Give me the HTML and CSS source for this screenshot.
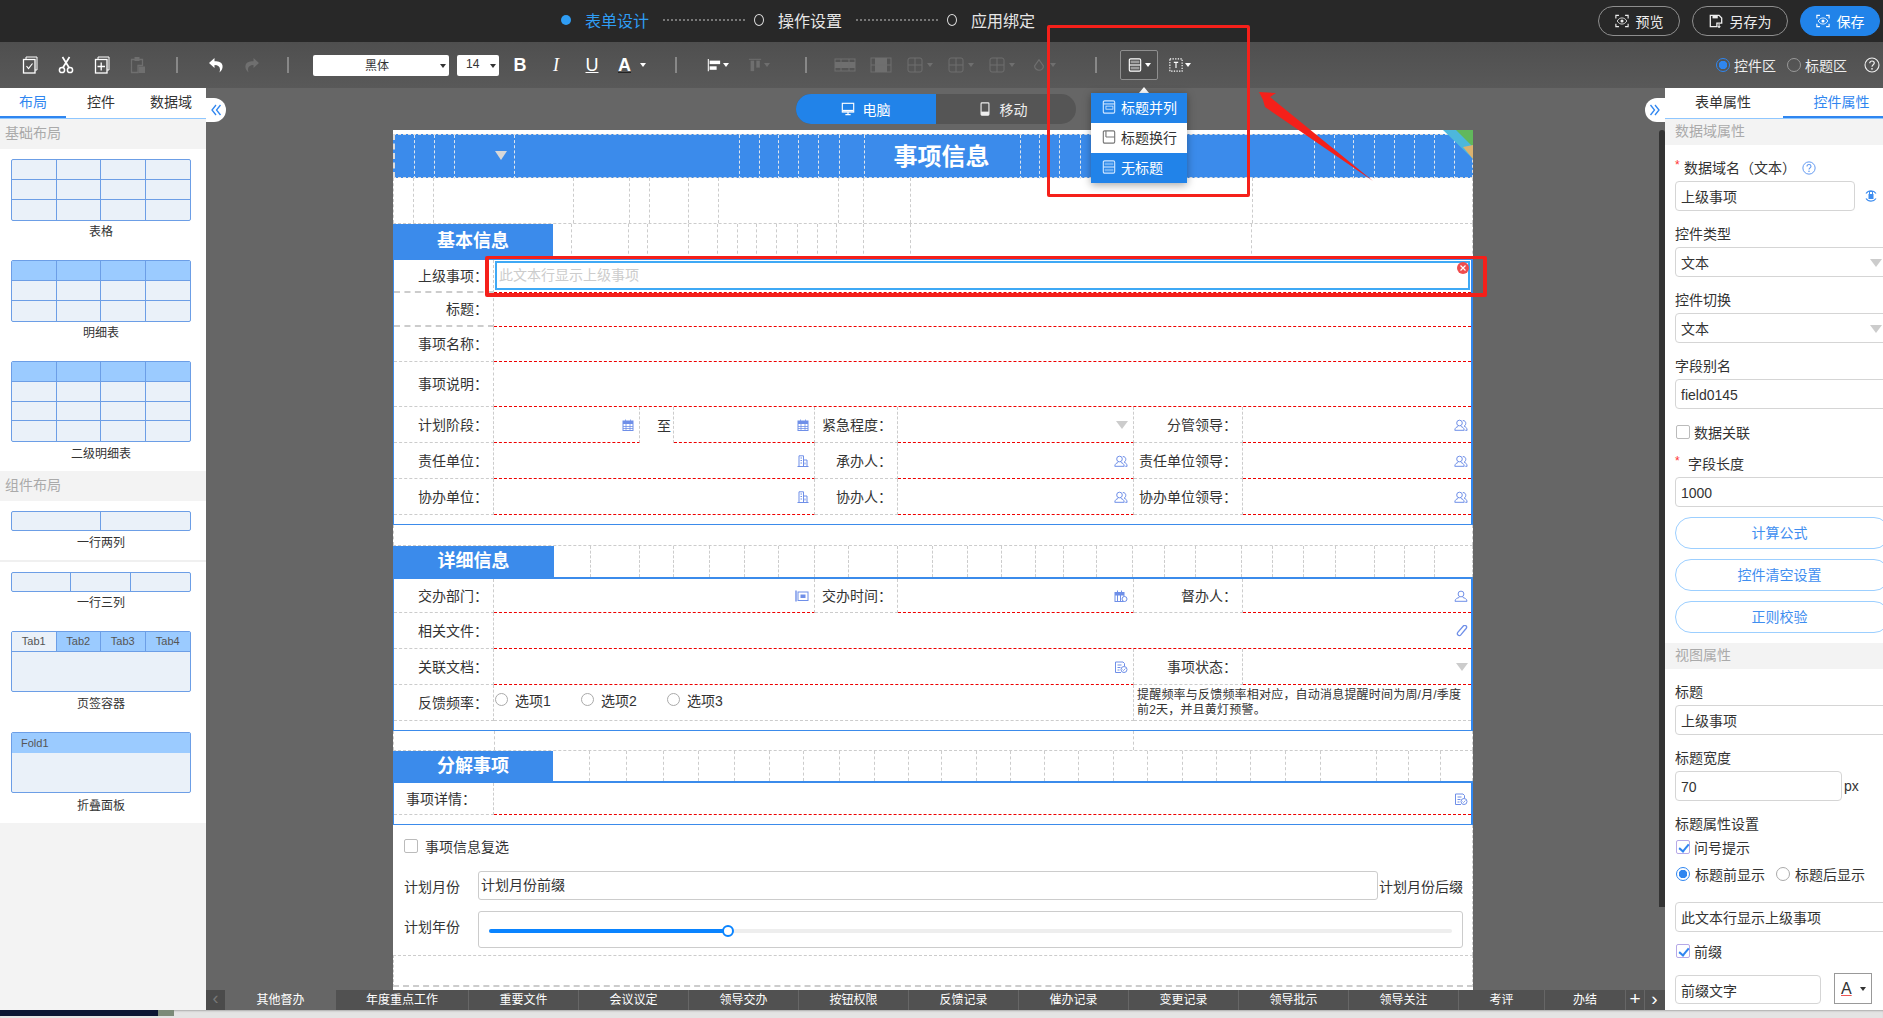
FILE: index.html
```html
<!DOCTYPE html>
<html lang="zh">
<head>
<meta charset="utf-8">
<title>表单设计</title>
<link rel="stylesheet" href="styles.css">
</head>
<body>
<svg class="defs" width="0" height="0" aria-hidden="true">
  <symbol id="form" viewBox="0 0 16 18"><path d="M4 3V1h11v13h-2" fill="none" stroke="currentColor"/><rect x="1.5" y="3.5" width="11.500" height="13.500" fill="none" stroke="currentColor" stroke-width="1.300"/><path d="M4.500 10l2 2.500 4-5" fill="none" stroke="currentColor" stroke-width="1.200"/></symbol>
  <symbol id="cut" viewBox="0 0 16 18"><circle cx="4" cy="14" r="2.600" fill="none" stroke="currentColor" stroke-width="1.500"/><circle cx="12" cy="14" r="2.600" fill="none" stroke="currentColor" stroke-width="1.500"/><path d="M5 11.500 11.500 1M11 11.500 4.500 1" stroke="currentColor" stroke-width="1.700"/></symbol>
  <symbol id="copy" viewBox="0 0 16 18"><path d="M4 3V1h11v13h-2" fill="none" stroke="currentColor"/><rect x="1.500" y="3.500" width="11.500" height="13.500" fill="none" stroke="currentColor" stroke-width="1.300"/><path d="M7.200 6.500v8M3.500 10.500h7.500" stroke="currentColor" stroke-width="1.300"/></symbol>
  <symbol id="paste" viewBox="0 0 16 18"><path d="M1.500 3.500h11v6H8v7H1.500z" fill="none" stroke="currentColor" stroke-width="1.300"/><rect x="4.500" y="1" width="5" height="4" fill="currentColor"/><rect x="8.500" y="10.500" width="6.500" height="6.500" fill="currentColor"/></symbol>
  <symbol id="undo" viewBox="0 0 16 18"><path d="M6.500 2 1 7l5.500 5V9c3.500 0 5.500 1.500 5.500 4.500 0 1-.2 2-.6 3 2.400-2 3.600-4.500 3.100-7C14 6.500 11 5.200 6.500 5.200z" fill="currentColor"/></symbol>
  <symbol id="redo" viewBox="0 0 16 18"><path d="M9.500 2 15 7l-5.500 5V9C6 9 4 10.500 4 13.500c0 1 .2 2 .6 3-2.400-2-3.600-4.500-3.100-7C2 6.500 5 5.200 9.500 5.200z" fill="currentColor"/></symbol>
  <symbol id="alignl" viewBox="0 0 16 16"><path d="M1.500 1v14" stroke="currentColor" stroke-width="1.200"/><rect x="3" y="3" width="12" height="4" fill="currentColor"/><rect x="3" y="9.500" width="8" height="4" fill="currentColor"/></symbol>
  <symbol id="alignt" viewBox="0 0 16 16"><path d="M1 1.500h14" stroke="currentColor" stroke-width="1.200"/><rect x="3" y="3" width="4" height="12" fill="currentColor"/><rect x="9.500" y="3" width="4" height="8" fill="currentColor"/></symbol>
  <symbol id="merge" viewBox="0 0 22 16"><rect x="1" y="2" width="20" height="12" fill="none" stroke="currentColor"/><rect x="1" y="5" width="20" height="6" fill="currentColor"/><path d="M7 2v12M15 2v12" stroke="currentColor"/></symbol>
  <symbol id="mergev" viewBox="0 0 22 16"><rect x="1" y="1" width="20" height="14" fill="none" stroke="currentColor"/><rect x="5" y="1" width="12" height="14" fill="currentColor"/><path d="M1 8h20" stroke="currentColor"/></symbol>
  <symbol id="cross" viewBox="0 0 16 16"><rect x="1" y="1" width="14" height="14" rx="2" fill="none" stroke="currentColor"/><path d="M8 1v14M1 8h14" stroke="currentColor"/></symbol>
  <symbol id="drop" viewBox="0 0 16 16"><path d="M8 2 13 9a5 5 0 1 1-10 0z" fill="none" stroke="currentColor" stroke-width="1.400"/></symbol>
  <symbol id="rows" viewBox="0 0 16 16"><rect x="1.500" y="1" width="13" height="14" rx="1.500" fill="none" stroke="currentColor" stroke-width="1.300"/><rect x="3" y="3" width="10" height="3" fill="currentColor" opacity=".45"/><path d="M1.500 8h13" stroke="currentColor" stroke-width="1.300"/><rect x="3" y="10" width="10" height="3" fill="currentColor" opacity=".45"/></symbol>
  <symbol id="rows2" viewBox="0 0 16 16"><rect x="1.500" y="1" width="13" height="14" rx="1.500" fill="none" stroke="currentColor" stroke-width="1.300"/><path d="M1.500 4.500h13" stroke="currentColor" stroke-width="1.300"/><rect x="4.500" y="7" width="8" height="3.500" fill="none" stroke="currentColor"/></symbol>
  <symbol id="rows3" viewBox="0 0 16 16"><rect x="1.500" y="1" width="13" height="14" rx="1.500" fill="none" stroke="currentColor" stroke-width="1.300"/><path d="M4.500 1v7M4.500 8h10" stroke="currentColor" stroke-width="1.300"/></symbol>
  <symbol id="tbox" viewBox="0 0 16 16"><rect x="1" y="1" width="14" height="14" fill="none" stroke="currentColor" stroke-dasharray="1.500 1.500" stroke-width="1.300"/><path d="M5.500 5h5M8 5v6.500" stroke="currentColor" stroke-width="1.300"/></symbol>
  <symbol id="eye" viewBox="0 0 16 16"><path d="M1 5V1.500h3.500M11.500 1.500H15V5M15 11v3.500h-3.500M4.500 14.500H1V11" fill="none" stroke="currentColor" stroke-width="1.300"/><path d="M2.500 8C4 5.500 6 4.500 8 4.500s4 1 5.500 3.500C12 10.500 10 11.500 8 11.500S4 10.500 2.500 8z" fill="none" stroke="currentColor"/><circle cx="8" cy="8" r="1.800" fill="currentColor"/></symbol>
  <symbol id="save" viewBox="0 0 16 16"><path d="M1.500 1.500h10l3 3v6H9v4H1.500z" fill="none" stroke="currentColor" stroke-width="1.500"/><rect x="4" y="1.500" width="6" height="3.500" fill="currentColor"/><path d="M11.500 11.500v4M10 14l1.500 1.500L13 14" fill="none" stroke="currentColor" stroke-width="1.200"/></symbol>
  <symbol id="pc" viewBox="0 0 16 16"><rect x="1.500" y="1.500" width="13" height="10" fill="none" stroke="currentColor" stroke-width="1.300"/><rect x="2" y="9" width="12" height="2" fill="currentColor"/><path d="M8 11.500v3M5 14.500h6" stroke="currentColor" stroke-width="1.400"/></symbol>
  <symbol id="mobile" viewBox="0 0 16 16"><rect x="3.500" y="1" width="9" height="14" rx="1" fill="none" stroke="currentColor" stroke-width="1.300"/><rect x="3.500" y="11" width="9" height="4" fill="currentColor"/></symbol>
  <symbol id="help" viewBox="0 0 16 16"><circle cx="8" cy="8" r="7" fill="none" stroke="currentColor" stroke-width="1.100"/><path d="M5.700 6.200C5.700 4.800 6.800 4 8 4s2.300.8 2.300 2.100C10.300 7.800 8 7.900 8 9.800" fill="none" stroke="currentColor" stroke-width="1.200"/><circle cx="8" cy="11.800" r=".9" fill="currentColor"/></symbol>
  <symbol id="cal" viewBox="0 0 12 12"><rect x="1" y="2" width="10" height="9.500" fill="none" stroke="currentColor"/><rect x="1" y="2" width="10" height="3" fill="currentColor"/><path d="M3.500 .5v2M8.500 .5v2M1 7.500h10M1 9.500h10M4 5v6M8 5v6" stroke="currentColor" stroke-width=".8"/></symbol>
  <symbol id="org" viewBox="0 0 12 12"><path d="M2 11.500V.8h4.500v10.700M6.500 5H10v6.500M.5 11.500h11" fill="none" stroke="currentColor"/><path d="M3.500 3h1.500M3.500 5.500h1.500M3.500 8h1.500M8 7.500v2" stroke="currentColor"/></symbol>
  <symbol id="users" viewBox="0 0 14 12"><circle cx="5.500" cy="4" r="2.800" fill="none" stroke="currentColor"/><path d="M.8 11.300c0-2.500 2-3.500 3.400-3.800M6.800 7.500c1.500.3 3.400 1.300 3.400 3.800H.8" fill="none" stroke="currentColor"/><path d="M8.800 1.500c2 0 3 1.300 3 2.800 0 1.200-.7 2.300-1.700 2.900 1.500.5 3 1.600 3 4.100h-1.800" fill="none" stroke="currentColor"/></symbol>
  <symbol id="user" viewBox="0 0 14 12"><circle cx="7" cy="4" r="2.900" fill="none" stroke="currentColor"/><path d="M1 11.300c0-2.500 2.600-3.500 4.300-3.800M8.700 7.500c1.700.3 4.300 1.300 4.300 3.800H1" fill="none" stroke="currentColor"/></symbol>
  <symbol id="calc" viewBox="0 0 14 12"><rect x="1" y="2.500" width="9" height="9" fill="none" stroke="currentColor"/><rect x="1" y="2.500" width="9" height="3" fill="currentColor"/><path d="M3.500 .5v2M7.500 .5v2M3.500 5v6M6.500 5v6" stroke="currentColor"/><circle cx="10.500" cy="9" r="2.500" fill="#fff" stroke="currentColor"/></symbol>
  <symbol id="dept" viewBox="0 0 14 12"><path d="M1 .5v11" stroke="currentColor" stroke-width="1.400"/><rect x="3" y="2" width="10" height="8.500" fill="none" stroke="currentColor"/><rect x="5.500" y="4.500" width="5" height="3.500" fill="currentColor"/></symbol>
  <symbol id="clip" viewBox="0 0 12 12"><path d="M10.500 3 4.800 9.800c-.8 1-2 1-2.800.3s-.8-1.900 0-2.900L7.300 1C8.100.2 9.200.1 10 .8s.8 1.800.1 2.700L5 9.600" fill="none" stroke="currentColor" stroke-width="1.300"/></symbol>
  <symbol id="doc" viewBox="0 0 14 12"><path d="M9 1H1.500v10.500H7M9 1l1.500 1.500V5" fill="none" stroke="currentColor"/><path d="M3.500 4h4M3.500 6.500h3M3.500 9h2" stroke="currentColor"/><circle cx="10" cy="8.500" r="3" fill="none" stroke="currentColor"/><path d="M8.500 8.500l1 1 2-2" fill="none" stroke="currentColor" stroke-width=".8"/></symbol>
  <symbol id="clr" viewBox="0 0 12 12"><circle cx="6" cy="6" r="6" fill="#f04d4f"/><path d="M3.500 3.500l5 5M8.500 3.500l-5 5" stroke="#fff" stroke-width="1.200"/></symbol>
  <symbol id="bind" viewBox="0 0 14 14"><path d="M2 4.500A6 6 0 0 1 12 4.500M12 9.500A6 6 0 0 1 2 9.500" fill="none" stroke="currentColor" stroke-width="1.200"/><rect x="4.500" y="5" width="5" height="5" fill="currentColor"/><rect x="5.500" y="2.500" width="3" height="3" fill="none" stroke="currentColor"/></symbol>
  <symbol id="chevl" viewBox="0 0 12 12"><path d="M6 1 2 6l4 5M10.500 1l-4 5 4 5" fill="none" stroke="currentColor" stroke-width="1.300"/></symbol>
  <symbol id="chevr" viewBox="0 0 12 12"><path d="M6 1l4 5-4 5M1.500 1l4 5-4 5" fill="none" stroke="currentColor" stroke-width="1.300"/></symbol>
</svg>

<div class="app">
  <header class="hd">
    <div class="steps">
      <i class="st-dot"></i><span class="st-on">表单设计</span><i class="st-line"></i>
      <i class="st-ring"></i><span>操作设置</span><i class="st-line"></i>
      <i class="st-ring"></i><span>应用绑定</span>
    </div>
    <div class="hd-btns">
      <button class="hb hb-1"><svg class="ic14"><use href="#eye"/></svg>预览</button>
      <button class="hb hb-2"><svg class="ic14"><use href="#save"/></svg>另存为</button>
      <button class="hb hb-3"><svg class="ic14"><use href="#eye"/></svg>保存</button>
    </div>
  </header>

  <div class="tb">
    <span class="tool"><svg class="ic16"><use href="#form"/></svg></span>
    <span class="tool"><svg class="ic16"><use href="#cut"/></svg></span>
    <span class="tool"><svg class="ic16"><use href="#copy"/></svg></span>
    <span class="tool dim"><svg class="ic16"><use href="#paste"/></svg></span>
    <i class="sep sep-a"></i>
    <span class="tool tool-u"><svg class="ic16"><use href="#undo"/></svg></span>
    <span class="tool dim"><svg class="ic16"><use href="#redo"/></svg></span>
    <i class="sep sep-b"></i>
    <span class="sel sel-font">黑体<i class="car car-dk"></i></span>
    <span class="sel sel-size">14<i class="car car-dk"></i></span>
    <span class="tool tool-b fmt fmt-b">B</span>
    <span class="tool fmt fmt-i">I</span>
    <span class="tool fmt fmt-u">U</span>
    <span class="tool tool-a fmt fmt-a">A<i class="car"></i></span>
    <i class="sep sep-c"></i>
    <span class="tool tool-al"><svg class="ic14"><use href="#alignl"/></svg><i class="car"></i></span>
    <span class="tool tool-at dim"><svg class="ic14"><use href="#alignt"/></svg><i class="car"></i></span>
    <i class="sep sep-d"></i>
    <span class="tool tool-m1 dim"><svg class="ic22"><use href="#merge"/></svg></span>
    <span class="tool dim"><svg class="ic22"><use href="#mergev"/></svg></span>
    <span class="tool tool-w dim"><svg class="ic16"><use href="#cross"/></svg><i class="car"></i></span>
    <span class="tool tool-w dim"><svg class="ic16"><use href="#cross"/></svg><i class="car"></i></span>
    <span class="tool tool-w dim"><svg class="ic16"><use href="#cross"/></svg><i class="car"></i></span>
    <span class="tool tool-w tool-dr dim"><svg class="ic14"><use href="#drop"/></svg><i class="car"></i></span>
    <i class="sep sep-e"></i>
    <span class="tool-active"><svg class="ic14"><use href="#rows"/></svg><i class="car"></i></span>
    <span class="tool tool-t"><svg class="ic14"><use href="#tbox"/></svg><i class="car"></i></span>
    <div class="zone">
      <label class="zn"><i class="radio radio-on radio-dk"></i>控件区</label>
      <label class="zn"><i class="radio radio-dk"></i>标题区</label>
      <svg class="ic16 zone-help"><use href="#help"/></svg>
    </div>
  </div>

  <main class="main">
    <aside class="lp">
      <nav class="tabs tabs-l"><span class="tab on">布局</span><span class="tab">控件</span><span class="tab">数据域</span></nav>
      <h4 class="grp">基础布局</h4>
      <div class="lib">
        <div class="tpl t-4x3"><i></i><i></i><i></i><i></i><i></i><i></i><i></i><i></i><i></i><i></i><i></i><i></i></div>
        <p class="cap cap-1">表格</p>
        <div class="tpl t-4x3 t-head"><i></i><i></i><i></i><i></i><i></i><i></i><i></i><i></i><i></i><i></i><i></i><i></i></div>
        <p class="cap cap-1">明细表</p>
        <div class="tpl t-4x4 t-head"><i></i><i></i><i></i><i></i><i></i><i></i><i></i><i></i><i></i><i></i><i></i><i></i><i></i><i></i><i></i><i></i></div>
        <p class="cap cap-3">二级明细表</p>
      </div>
      <h4 class="grp">组件布局</h4>
      <div class="lib lib-b">
        <div class="tpl t-2"><i></i><i></i></div>
        <p class="cap cap-4">一行两列</p>
        <hr class="lib-hr">
        <div class="tpl t-3"><i></i><i></i><i></i></div>
        <p class="cap cap-5">一行三列</p>
        <div class="tpl t-tabs">
          <div class="tabrow"><i class="cur">Tab1</i><i>Tab2</i><i>Tab3</i><i>Tab4</i></div>
        </div>
        <p class="cap cap-6">页签容器</p>
        <div class="tpl t-fold"><div class="foldhd">Fold1</div></div>
        <p class="cap cap-7">折叠面板</p>
      </div>
    </aside>

    <section class="canvas">
      <div class="switch-wrap">
        <div class="switch">
          <span class="sw sw-on"><svg class="ic14"><use href="#pc"/></svg>电脑</span>
          <span class="sw"><svg class="ic14"><use href="#mobile"/></svg>移动</span>
        </div>
      </div>

      <div class="paper">
        <div class="band">
          <div class="gd gd-title"><i></i><i></i><i></i><i></i><i></i><i></i><i></i><i></i><i></i><i></i><i></i><i></i><i></i><i></i><i></i><i></i><i></i><i></i><i></i><i></i><i></i><i></i><i></i><i></i><i></i></div>
          <h1 class="band-title">事项信息</h1>
          <i class="band-tri"></i>
        </div>
        <div class="gd gd-blank"><i></i><i></i><i></i><i></i><i></i><i></i><i></i><i></i><i></i><i></i><i></i><i></i></div>

        <div class="sec-head sh-1"><h2 class="sec-label">基本信息</h2><i></i><i></i><i></i><i></i><i></i><i></i><i></i><i></i><i></i><i></i><i></i><i></i><i></i><i></i><i></i></div>
        <div class="tbl tbl-1">
          <div class="lab thick">上级事项：</div>
          <div class="val c-end val-sel"><div class="selected">此文本行显示上级事项<svg class="sel-x"><use href="#clr"/></svg></div></div>
          <div class="lab thick">标题：</div><div class="val c-end"></div>
          <div class="lab">事项名称：</div><div class="val c-end"></div>
          <div class="lab">事项说明：</div><div class="val c-end"></div>
          <div class="lab">计划阶段：</div>
          <div class="val"><svg class="fi fi-12"><use href="#cal"/></svg></div>
          <div class="mid">至</div>
          <div class="val"><svg class="fi fi-12"><use href="#cal"/></svg></div>
          <div class="lab">紧急程度：</div>
          <div class="val"><i class="tri"></i></div>
          <div class="lab">分管领导：</div>
          <div class="val v-last"><svg class="fi"><use href="#users"/></svg></div>
          <div class="lab">责任单位：</div>
          <div class="val c-3"><svg class="fi fi-12"><use href="#org"/></svg></div>
          <div class="lab">承办人：</div>
          <div class="val"><svg class="fi"><use href="#users"/></svg></div>
          <div class="lab">责任单位领导：</div>
          <div class="val v-last"><svg class="fi"><use href="#users"/></svg></div>
          <div class="lab">协办单位：</div>
          <div class="val c-3"><svg class="fi fi-12"><use href="#org"/></svg></div>
          <div class="lab">协办人：</div>
          <div class="val"><svg class="fi"><use href="#users"/></svg></div>
          <div class="lab">协办单位领导：</div>
          <div class="val v-last"><svg class="fi"><use href="#users"/></svg></div>
        </div>
        <div class="gap gap-1"></div>

        <div class="sec-head sh-2"><h2 class="sec-label">详细信息</h2><i></i><i></i><i></i><i></i><i></i><i></i><i></i><i></i><i></i><i></i><i></i><i></i><i></i><i></i><i></i><i></i><i></i><i></i><i></i><i></i><i></i><i></i><i></i><i></i><i></i><i></i></div>
        <div class="tbl tbl-2">
          <div class="lab">交办部门：</div>
          <div class="val c-3"><svg class="fi"><use href="#dept"/></svg></div>
          <div class="lab">交办时间：</div>
          <div class="val"><svg class="fi"><use href="#calc"/></svg></div>
          <div class="lab">督办人：</div>
          <div class="val v-last"><svg class="fi"><use href="#user"/></svg></div>
          <div class="lab">相关文件：</div>
          <div class="val c-end v-last"><svg class="fi fi-12"><use href="#clip"/></svg></div>
          <div class="lab">关联文档：</div>
          <div class="val c-lead"><svg class="fi"><use href="#doc"/></svg></div>
          <div class="lab">事项状态：</div>
          <div class="val v-last"><i class="tri"></i></div>
          <div class="lab">反馈频率：</div>
          <div class="val c-lead v-opts">
            <label class="opt"><i class="radio"></i>选项1</label>
            <label class="opt"><i class="radio"></i>选项2</label>
            <label class="opt"><i class="radio"></i>选项3</label>
          </div>
          <div class="note c-note">提醒频率与反馈频率相对应，自动消息提醒时间为周/月/季度<br>前2天，并且黄灯预警。</div>
        </div>
        <div class="gap gap-2"><i></i><i></i></div>

        <div class="sec-head sh-3"><h2 class="sec-label">分解事项</h2><i></i><i></i><i></i><i></i><i></i><i></i><i></i><i></i><i></i><i></i><i></i><i></i><i></i><i></i><i></i><i></i><i></i><i></i><i></i><i></i><i></i><i></i><i></i><i></i><i></i><i></i></div>
        <div class="tbl tbl-3">
          <div class="lab lab-in">事项详情：</div>
          <div class="val c-end v-last"><svg class="fi"><use href="#doc"/></svg></div>
        </div>

        <div class="extra">
          <label class="chk-row"><i class="chk"></i>事项信息复选</label>
          <div class="ex-row">
            <span class="ex-lab">计划月份</span>
            <div class="ex-input">计划月份前缀</div>
            <span class="ex-suffix">计划月份后缀</span>
          </div>
          <div class="ex-row ex-row-s">
            <span class="ex-lab ex-lab-s">计划年份</span>
            <div class="ex-slider"><div class="track"><div class="fill"><i class="thumb"></i></div></div></div>
          </div>
        </div>
        <div class="foot-dash"></div>
      </div>

      <nav class="sheet">
        <span class="sh-arrow">‹</span>
        <span class="sh-tab sh-cur">其他督办</span>
        <span class="sh-tab sh-w1">年度重点工作</span>
        <span class="sh-tab">重要文件</span>
        <span class="sh-tab">会议议定</span>
        <span class="sh-tab">领导交办</span>
        <span class="sh-tab">按钮权限</span>
        <span class="sh-tab">反馈记录</span>
        <span class="sh-tab">催办记录</span>
        <span class="sh-tab">变更记录</span>
        <span class="sh-tab">领导批示</span>
        <span class="sh-tab">领导关注</span>
        <span class="sh-tab sh-w2">考评</span>
        <span class="sh-tab sh-w3">办结</span>
        <span class="sh-ctl sh-plus">+</span>
        <span class="sh-ctl">›</span>
      </nav>

      <button class="fold fold-l"><svg class="ic12"><use href="#chevl"/></svg></button>
      <button class="fold fold-r"><svg class="ic12"><use href="#chevr"/></svg></button>
      <i class="scrollbar"></i>
    </section>

    <aside class="rp">
      <nav class="tabs tabs-r"><span class="tab">表单属性</span><span class="tab on">控件属性</span></nav>
      <h4 class="grp grp-r">数据域属性</h4>
      <div class="field f-first">
        <div class="f-lab"><em class="req">*</em>数据域名（文本）<svg class="q"><use href="#help"/></svg></div>
        <div class="f-line"><div class="inp inp-180">上级事项</div><svg class="bind"><use href="#bind"/></svg></div>
      </div>
      <div class="field"><div class="f-lab">控件类型</div><div class="inp">文本<i class="tri tri-r"></i></div></div>
      <div class="field"><div class="f-lab">控件切换</div><div class="inp">文本<i class="tri tri-r"></i></div></div>
      <div class="field"><div class="f-lab">字段别名</div><div class="inp">field0145</div></div>
      <label class="chk-r chk-r-a"><i class="chk"></i>数据关联</label>
      <div class="field f-len"><div class="f-lab"><em class="req req-w">*</em>字段长度</div><div class="inp">1000</div></div>
      <button class="pill pill-1">计算公式</button>
      <button class="pill">控件清空设置</button>
      <button class="pill">正则校验</button>
      <h4 class="grp grp-r grp-v">视图属性</h4>
      <div class="field"><div class="f-lab">标题</div><div class="inp">上级事项</div></div>
      <div class="field"><div class="f-lab">标题宽度</div><div class="f-line"><div class="inp inp-167">70</div><span class="px">px</span></div></div>
      <div class="field f-attr"><div class="f-lab">标题属性设置</div></div>
      <label class="chk-r chk-r-b"><i class="chk chk-on"></i>问号提示</label>
      <div class="rad-row">
        <label class="rad"><i class="radio radio-on"></i>标题前显示</label>
        <label class="rad"><i class="radio"></i>标题后显示</label>
      </div>
      <div class="inp inp-ph">此文本行显示上级事项</div>
      <label class="chk-r chk-r-c"><i class="chk chk-on"></i>前缀</label>
      <div class="f-line f-pre"><div class="inp inp-146">前缀文字</div><div class="colorbox"><span class="cb-a">A</span><i class="car car-dk"></i></div></div>
    </aside>
  </main>

  <footer class="strip"><i class="s-navy"></i><i class="s-green"></i></footer>

  <div class="menu-tip"></div>
  <ul class="menu">
    <li class="mi mi-on"><svg class="ic14"><use href="#rows2"/></svg>标题并列</li>
    <li class="mi mi-w"><svg class="ic14"><use href="#rows3"/></svg>标题换行</li>
    <li class="mi mi-on"><svg class="ic14"><use href="#rows"/></svg>无标题</li>
  </ul>
  <i class="mark mark-menu"></i>
  <i class="mark mark-field"></i>
  <svg class="mark-arrow" viewBox="0 0 130 100"><polygon points="1,1 18,2 12,6 115,90 7,16 5,9" fill="#f5201a"/></svg>
  <svg class="ribbon" viewBox="0 0 30 30"><polygon points="0,0 30,0 30,29" fill="#4db7dc"/><polygon points="13,0 30,0 30,17 22,9" fill="#61b85c"/><polygon points="20,17 30,15 30,29" fill="#dcb26e"/></svg>
</div>
</body>
</html>
```

FILE: styles.css
```css
* { box-sizing: border-box; }
html, body { margin: 0; padding: 0; }
body {
  width: 1883px; height: 1018px; overflow: hidden;
  font-family: "Liberation Sans", "Noto Sans CJK SC", sans-serif;
  font-size: 14px; color: #333; background: #e4e4e4;
}
i, em { font-style: normal; }
h1, h2, h4, p, ul { margin: 0; padding: 0; font-weight: normal; }
button { font: inherit; background: none; border: 0; padding: 0; }
.defs { position: absolute; }
svg { display: block; flex: none; }
.ic12 { width: 12px; height: 12px; }
.ic14 { width: 14px; height: 14px; }
.ic16 { width: 16px; height: 18px; }
.ic22 { width: 22px; height: 16px; }

.app { position: relative; width: 1883px; height: 1018px; display: flex; flex-direction: column; }

/* header */
.hd { height: 42px; background: #282828; color: #e6e6e6; display: flex; align-items: center; font-size: 16px; flex: none; }
.steps { margin-left: 561px; margin-top: -3px; display: flex; align-items: center; gap: 14px; }
.st-dot { width: 10px; height: 10px; border-radius: 50%; background: #2f9df4; }
.st-on { color: #2f9df4; }
.st-line { width: 82px; border-top: 2px dotted #777; margin-right: -5px; }
.st-ring { width: 10px; height: 12px; border: 1.500px solid #ddd; border-radius: 50%; }
.hd-btns { margin-left: auto; margin-right: 3px; display: flex; gap: 12px; }
.hb { height: 30px; border: 1px solid #8e8e8e; border-radius: 15px; color: #eee; font-size: 14px; display: flex; align-items: center; justify-content: center; gap: 7px; padding-bottom: 1px; }
.hb-1 { width: 82px; }
.hb-2 { width: 96px; }
.hb-3 { width: 80px; background: #2183e9; border-color: #2183e9; color: #fff; }

/* toolbar */
.tb { height: 46px; flex: none; padding-left: 12px; display: flex; align-items: center; color: #fff; background: linear-gradient(#4f4f4f, #595959); }
.tool { width: 36px; height: 24px; display: flex; align-items: center; justify-content: center; gap: 4px; }
.dim { color: #6f6f6f; }
.sep { width: 2px; height: 16px; background: #888; flex: none; }
.sep-a { margin-left: 20px; }
.tool-u { margin-left: 20px; }
.sep-b { margin-left: 17px; }
.sel { background: #fff; color: #333; font-size: 12px; height: 21px; border-radius: 2px; margin-left: 24px; display: flex; align-items: center; justify-content: center; position: relative; padding-bottom: 2px; }
.sel-font { width: 136px; padding-right: 8px; }
.sel-size { width: 42px; margin-left: 8px; justify-content: flex-start; padding-left: 9px; }
.sel .car { position: absolute; right: 3px; top: 9px; }
.car { width: 0; height: 0; border: 3px solid transparent; border-top: 4px solid currentColor; border-bottom: 0; flex: none; }
.car-dk { color: #333; }
.fmt { font-size: 18px; color: #fff; }
.tool-b { margin-left: 3px; font-weight: bold; }
.fmt-i { font-family: "Liberation Serif", serif; font-style: italic; }
.fmt-u { text-decoration: underline; }
.tool-a { width: 44px; gap: 9px; font-weight: bold; border: 0; }
.fmt-a { text-decoration: underline; text-decoration-color: #222; }
.sep-c { margin-left: 21px; }
.tool-al { margin-left: 23px; gap: 2px; }
.tool-at { margin-left: 5px; gap: 2px; }
.sep-d { margin-left: 28px; }
.tool-m1 { margin-left: 20px; }
.tool-w { width: 41px; }
.tool-dr { margin-left: 1px; }
.sep-e { margin-left: 31px; }
.tool-active { width: 38px; height: 30px; margin-left: 23px; border: 1px solid #8f8f8f; border-radius: 2px; display: flex; align-items: center; justify-content: center; gap: 3px; background: #4c4c4c; }
.tool-t { margin-left: 4px; gap: 2px; }
.zone { margin-left: auto; display: flex; align-items: center; gap: 11px; padding-right: 3px; }
.zn { display: flex; align-items: center; gap: 4px; color: #eee; }
.zone-help { color: #eee; margin-left: 6px; }
.radio { width: 14px; height: 14px; border: 1px solid #aaa; border-radius: 50%; background: #fff; display: block; flex: none; }
.radio-dk { background: none; border-color: #999; }
.radio-on { border-color: #2f86f0; background: radial-gradient(circle, #2f86f0 0 4px, transparent 4.500px); }

/* main */
.main { flex: 1; min-height: 0; display: flex; }
.lp { width: 206px; flex: none; background: #f3f3f3; }
.tabs { height: 31px; display: grid; background: #fff; border-bottom: 1px solid #8fc7ff; }
.tabs-l { grid-template-columns: 66px 70px 70px; }
.tabs-r { grid-template-columns: 118px 100px; }
.tab { text-align: center; line-height: 28px; height: 30px; }
.tab.on { color: #2f86f0; border-bottom: 2px solid #2f86f0; }
.grp { height: 30px; line-height: 28px; padding-left: 5px; color: #aaa; background: #f3f3f3; font-size: 14px; }
.lib { background: #fff; padding: 10px 15px 0 11px; height: 322px; }
.lib-b { height: 321.500px; }
.tpl { width: 180px; background: #eaf1f9; border: 1px solid #6c9ee6; border-radius: 2px; display: grid; overflow: hidden; }
.tpl > i { border-right: 1px solid #6c9ee6; border-bottom: 1px solid #6c9ee6; }
.tpl > i:nth-child(4n) { border-right: 0; }
.t-4x3 { height: 62px; grid-template-columns: repeat(4, 1fr); grid-template-rows: repeat(3, 1fr); }
.t-4x3 > i:nth-last-child(-n+4), .t-4x4 > i:nth-last-child(-n+4) { border-bottom: 0; }
.t-4x4 { height: 81px; grid-template-columns: repeat(4, 1fr); grid-template-rows: repeat(4, 1fr); }
.t-head > i:nth-child(-n+4) { background: #9bcbff; }
.cap { text-align: center; font-size: 12px; line-height: 16px; }
.cap-1 { margin: 3px 0 20px; }
.cap-3 { margin-top: 4px; }
.t-2 { height: 20px; grid-template-columns: 1fr 1fr; }
.t-2 > i, .t-3 > i { border-bottom: 0; }
.t-2 > i:last-child, .t-3 > i:last-child { border-right: 0; }
.t-3 { height: 20px; grid-template-columns: repeat(3, 1fr); }
.cap-4 { margin: 4px 0 9px; }
.lib-hr { border: 0; height: 2px; background: #f0f0f0; margin: 0 -15px 10px -11px; }
.cap-5 { margin: 3px 0 20px; }
.t-tabs { height: 61px; display: block; }
.tabrow { height: 20px; display: grid; grid-template-columns: repeat(4, 1fr); border-bottom: 1px solid #6c9ee6; font-size: 11px; color: #555; }
.tabrow i { text-align: center; line-height: 19px; background: #9bcbff; border-right: 1px solid #6c9ee6; }
.tabrow i:last-child { border-right: 0; }
.tabrow i.cur { background: #eaf1f9; }
.cap-6 { margin: 4px 0 20px; }
.t-fold { height: 61px; display: block; }
.foldhd { height: 20px; background: #9bcbff; font-size: 11px; line-height: 20px; padding-left: 9px; color: #555; }
.cap-7 { margin-top: 5px; }

/* canvas */
.canvas { width: 1459px; flex: none; position: relative; background: #666; display: flex; flex-direction: column; }
.switch-wrap { height: 42px; padding-top: 6px; display: flex; justify-content: center; flex: none; }
.switch { width: 280px; height: 30px; border-radius: 15px; overflow: hidden; display: grid; grid-template-columns: 140px 140px; background: #555; color: #eee; }
.sw { display: flex; align-items: center; justify-content: center; gap: 8px; padding-right: 6px; }
.sw-on { background: #2183e9; color: #fff; padding-right: 0; }
.paper { width: 1080px; height: 860px; margin-left: 187px; padding-top: 4px; background: #fff; flex: none; position: relative; }

.gd { display: grid; height: 100%; }
.gd > i, .sec-head > i, .gap > i { border-right: 1px dashed #ccc; }
.band { height: 44px; background: #3b8beb; display: grid; border: 1px dashed #ddd; border-left: 2px dashed #ddd; position: relative; }
.band > .gd, .band > .band-title { grid-area: 1 / 1; }
.gd-title { grid-template-columns: 20px 20px 20px 60px 225px 20px 19px 20px 20px 21px 25px 156px 19px 20px 21px 20px 214px 20px 19px 21px 20px 20px 20px 20px 1fr; }
.gd-title > i { border-right-color: #dfe6ee; }
.gd-title > i:last-child { border-right: 0; }
.band-title { color: #fff; font-size: 24px; font-weight: bold; text-align: center; line-height: 44px; padding-left: 16px; }
.band-tri { position: absolute; left: 100px; top: 16px; border: 6px solid transparent; border-top: 9px solid #d8d8d8; border-bottom: 0; }
.gd-blank { height: 45px; border-left: 1px dashed #ccc; border-right: 1px dashed #ccc; grid-template-columns: 20px 20px 140px 56px 20px 39px 30px 120px 25px 47px 342px 1fr; }
.gd-blank > i:last-child { border-right: 0; }

.sec-head { display: grid; border-top: 1px dashed #ccc; border-bottom: 2px solid #3b8beb; }
.sec-head > i:last-child { border-right: 1px dashed #ccc; }
.sec-label { background: #3b8beb; color: #fff; font-size: 18px; font-weight: bold; text-align: center; }
.sh-1 { height: 37px; grid-template-columns: 160px 19px 57px 19px 41px 29px 20px 19px 20px 21px 20px 19px 27px 47px 341px 1fr; }
.sh-1 .sec-label { line-height: 35px; }
.sh-2 { height: 34px; grid-template-columns: 161px 37px 49px 34px 36px 35px 34px 36px 34px 49px 35px 35px 34px 34px 28px 33px 36px 32px 31px 46px 31px 31px 32px 39px 30px 30px 1fr; }
.sh-2 .sec-label { line-height: 30px; }
.sh-3 { height: 33px; grid-template-columns: 160px 37px 37px 37px 35px 36px 35px 34px 36px 35px 34px 33px 35px 34px 34px 34px 35px 34px 35px 34px 34px 35px 35px 56px 32px 32px 1fr; }
.sh-3 .sec-label { line-height: 30px; }

.tbl { display: grid; grid-template-columns: 100px 146px 34px 141px 83px 236px 109px 1fr; border-left: 1px solid #3b8beb; border-right: 2px solid #2f86f0; border-bottom: 1px solid #3b8beb; }
.tbl-1 { grid-template-rows: 33px 34px 35px 45px 36px 36px 36px; padding-bottom: 9px; }
.tbl-2 { grid-template-rows: 34px 36px 36px 36px; padding-bottom: 9px; }
.tbl-3 { grid-template-rows: 32px; padding-bottom: 9px; }
.lab { display: flex; align-items: center; justify-content: flex-end; padding: 0 5px 2px 0; white-space: nowrap; border-right: 1px dashed #ccc; border-bottom: 1px dashed #ccc; }
.lab.thick { border-bottom-width: 2px; }
.lab-in { padding-right: 17px; }
.val { display: flex; align-items: center; justify-content: flex-end; padding-right: 5px; border-bottom: 1px dashed #e00; border-right: 1px dashed #ccc; }
.v-last { border-right: 0; padding-right: 3px; }
.c-end { grid-column: 2 / -1; border-right: 0; }
.c-3 { grid-column: 2 / 5; }
.c-lead { grid-column: 2 / 7; }
.mid { border-right: 1px dashed #ccc; display: flex; align-items: center; padding-left: 17px; }
.fi { width: 14px; height: 12px; color: #6f8fe8; }
.fi-12 { width: 12px; }
.tri { width: 0; height: 0; border: 6px solid transparent; border-top: 8px solid #ccc; border-bottom: 0; display: block; margin-right: 0; }
.val-sel { padding: 1px 0 0 0; align-items: flex-start; padding-right: 1px; }
.selected { flex: 1; height: 29px; border: 2px solid #3fa9f5; padding-left: 2px; margin-left: 1px; line-height: 25px; color: #ccc; position: relative; }
.sel-x { position: absolute; right: -1px; top: -1px; width: 12px; height: 12px; }
.v-opts { justify-content: flex-start; padding: 0 0 6px; gap: 35px; border-bottom: 1px dashed #ccc; border-right: 1px dashed #ccc; align-items: center; }
.opt { display: flex; align-items: center; gap: 7px; width: 50px; margin-left: 1px; white-space: nowrap; }
.opt .radio { width: 13px; height: 13px; }
.note { grid-column: 7 / -1; font-size: 12px; line-height: 15px; padding: 3px 0 0 3px; white-space: nowrap; border-bottom: 1px dashed #ccc; letter-spacing: .2px; }
.gap { height: 20px; }
.gap-1 { border-left: 1px dashed #ccc; border-right: 1px dashed #ccc; }
.gap-2 { height: 19px; display: grid; grid-template-columns: 101px 639px 1fr; border-right: 1px dashed #ccc; border-left: 1px dashed #ccc; }
.gap-2 > i:first-child { border-right: 1px dashed #ccc; }
.gap-2 > i:nth-child(2) { border-right: 1px dashed #ccc; }

.extra { height: 130px; padding: 14px 10px 0 11px; border-right: 1px dashed #ccc; }
.chk-row { display: flex; align-items: center; gap: 7px; height: 14px; }
.chk { width: 14px; height: 14px; border: 1px solid #bbb; border-radius: 2px; background: #fff; display: block; flex: none; position: relative; }
.chk-on { border-color: #b6a9e8; }
.chk-on::after { content: ""; position: absolute; left: 4px; top: 1px; width: 4px; height: 8px; border: solid #2f86f0; border-width: 0 2px 2px 0; transform: rotate(40deg); }
.ex-row { display: flex; align-items: center; margin-top: 18px; height: 29px; }
.ex-lab { width: 74px; flex: none; }
.ex-input { width: 900px; height: 29px; border: 1px solid #ccc; border-radius: 3px; line-height: 27px; padding-left: 2px; flex: none; }
.ex-suffix { margin-left: 1px; white-space: nowrap; }
.ex-row-s { height: 37px; margin-top: 11px; align-items: flex-start; }
.ex-lab-s { margin-top: 5px; }
.ex-slider { width: 985px; height: 37px; border: 1px solid #ccc; border-radius: 3px; padding: 17px 10px 0; flex: none; }
.track { height: 4px; border-radius: 2px; background: #eee; }
.fill { width: 239px; height: 4px; border-radius: 2px; background: #0a84ff; position: relative; }
.thumb { position: absolute; right: -6px; top: -4px; width: 12px; height: 12px; border: 2px solid #0a84ff; border-radius: 50%; background: #fff; }
.foot-dash { height: 32px; border: 1px dashed #ccc; border-top-width: 1px; border-bottom-width: 2px; }

/* bottom sheet tabs */
.sheet { height: 20px; background: #515151; color: #fff; display: flex; font-size: 12px; flex: none; line-height: 20px; }
.sh-arrow { width: 19px; text-align: center; color: #777; font-size: 18px; line-height: 17px; background: #4b4b4b; }
.sh-tab { width: 110px; text-align: center; border-right: 1px solid #666; }
.sh-cur { width: 111px; background: #666; border-right: 0; }
.sh-w1 { width: 133px; }
.sh-w2 { width: 86px; }
.sh-w3 { width: 81px; }
.sh-ctl { width: 19px; text-align: center; font-size: 19px; line-height: 17px; }
.sh-plus { border-right: 1px solid #666; }

.fold { position: absolute; top: 10px; width: 20px; height: 24px; background: #fff; color: #2f86f0; display: flex; align-items: center; justify-content: center; }
.fold-l { left: 0; border-radius: 0 12px 12px 0; }
.fold-r { right: 0; border-radius: 12px 0 0 12px; }
.scrollbar { position: absolute; right: 0; top: 42px; width: 6px; height: 777px; background: #333; border-radius: 3px 3px 0 0; }

/* right panel */
.rp { flex: 1; background: #fff; overflow: hidden; }
.tabs-r .tab { white-space: nowrap; }
.tabs-r .tab:first-child { padding-right: 2px; }
.tabs-r .tab.on { padding-left: 17px; }
.grp-r { height: 26px; line-height: 25px; padding-left: 10px; }
.grp-v { margin-top: 10px; }
.field { margin: 13px 0 0 10px; }
.f-len { margin-top: 12px; }
.f-lab { height: 20px; line-height: 20px; margin-bottom: 3px; display: flex; align-items: center; white-space: nowrap; }
.req { color: #f33; font-size: 12px; width: 9px; align-self: flex-start; line-height: 14px; }
.req-w { width: 13px; }
.q { width: 14px; height: 14px; color: #5d96f0; margin-left: 6px; }
.inp { width: 215px; height: 30px; border: 1px solid #d5d5d5; border-radius: 4px; line-height: 30px; padding-left: 5px; position: relative; white-space: nowrap; }
.inp-180 { width: 180px; }
.inp-167 { width: 167px; }
.inp-146 { width: 146px; }
.inp-ph { margin: 18px 0 0 10px; }
.f-line { display: flex; align-items: center; }
.bind { width: 14px; height: 14px; margin-left: 9px; color: #3f8ef0; }
.tri-r { position: absolute; right: 7px; top: 11px; }
.px { margin-left: 2px; }
.chk-r { display: flex; align-items: center; gap: 4px; height: 20px; margin-left: 11px; white-space: nowrap; }
.chk-r-a { margin-top: 13px; }
.chk-r-b { margin-top: 3px; }
.chk-r-c { margin-top: 9px; }
.pill { display: block; width: 215px; height: 32px; margin: 10px 0 0 10px; border: 1px solid #9ccfff; border-radius: 16px; color: #3f8ef0; text-align: center; padding: 0 6px 2px 0; }
.rad-row { display: flex; margin: 7px 0 0 11px; height: 20px; align-items: center; }
.rad { display: flex; align-items: center; gap: 5px; margin-right: 11px; white-space: nowrap; }
.f-pre { margin: 13px 0 0 10px; gap: 13px; }
.f-pre .inp { height: 29px; }
.colorbox { width: 38px; height: 31px; border: 1px solid #999; display: flex; align-items: center; padding-left: 6px; gap: 8px; font-size: 16px; margin-top: -1px; }
.cb-a { text-decoration: underline; text-decoration-color: #e55; }

/* task strip */
.strip { height: 8px; flex: none; background: #e4e4e4; box-shadow: inset 0 2px 2px -1px #aaa; display: flex; align-items: flex-start; }
.s-navy { width: 158px; height: 6px; background: #0c1533; }
.s-green { width: 16px; height: 6px; background: #7b8a78; }

/* overlays */
.menu-tip { position: absolute; left: 1139px; top: 87px; border: 5px solid transparent; border-bottom: 6px solid #fff; border-top: 0; }
.menu { position: absolute; left: 1091px; top: 93px; width: 96px; list-style: none; box-shadow: 0 2px 8px rgba(0,0,0,.35); }
.mi { height: 30px; display: flex; align-items: center; gap: 5px; padding: 0 0 2px 11px; white-space: nowrap; }
.mi-on { background: #2183e9; color: #fff; }
.mi-on svg { color: #cfe6ff; }
.mi-w { background: #fff; color: #333; }
.mi-w svg { color: #777; }
.mark { position: absolute; display: block; border: 3px solid #f5201a; border-radius: 2px; }
.mark-menu { left: 1047px; top: 25px; width: 203px; height: 172px; }
.mark-field { left: 485px; top: 256px; width: 1002px; height: 41px; border-width: 4px; border-top-width: 3px; }
.mark-arrow { position: absolute; left: 1258px; top: 91px; width: 130px; height: 100px; }
.ribbon { position: absolute; left: 1443px; top: 130px; width: 30px; height: 30px; }
```
